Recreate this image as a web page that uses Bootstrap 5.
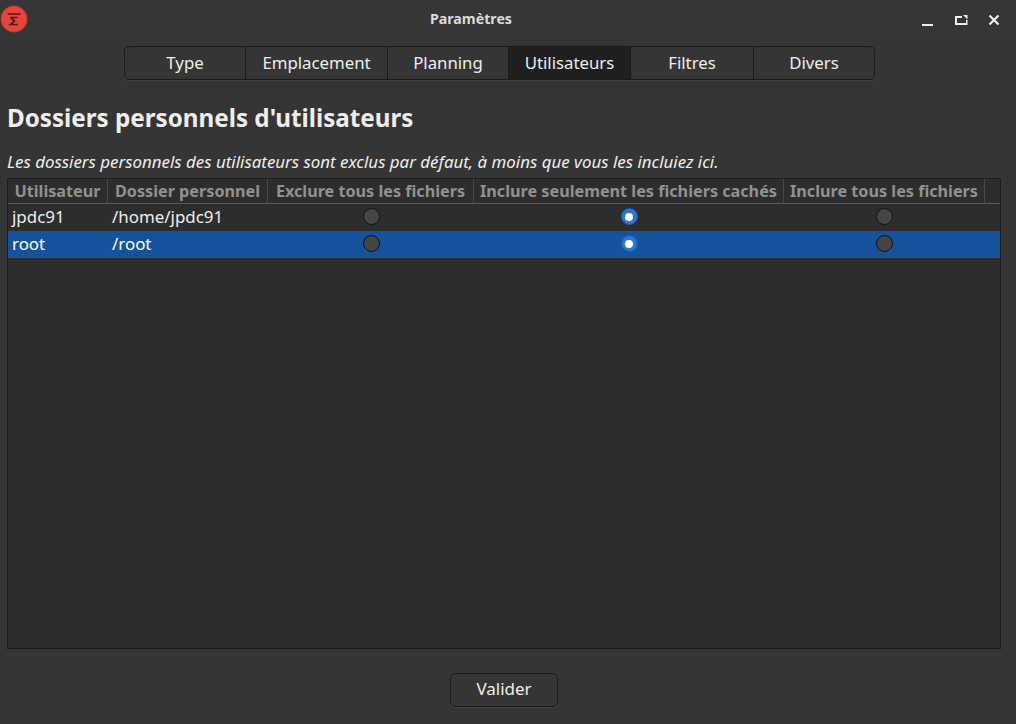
<!DOCTYPE html>
<html lang="fr"><head><meta charset="utf-8"><title>Paramètres</title>
<link href="https://cdn.jsdelivr.net/npm/bootstrap@5.3.0/dist/css/bootstrap.min.css" rel="stylesheet">
<style>
html,body{height:100%;margin:0;background:#353535}
body{font-family:"Noto Sans","Open Sans",sans-serif;color:#eeeeec;overflow:hidden}
.win{height:724px;width:1016px;background:#353535}
.titlebar{height:38px;padding:0 6px 0 0;background:#363636}
.tbicon{width:28px;height:28px;margin:5px 0 0 0}
.tbtitle{font-size:14.2px;font-weight:700;color:#dcdcdc;left:0;width:942px;top:10px;line-height:18px}
.wbtn{width:33px;height:38px;padding-top:1px}
.tabsbar{width:751px;height:34px;margin:8px 0 0 124px;border:1px solid #1b1b1b;border-radius:5px;background:#353535;box-shadow:0 1px 0 rgba(255,255,255,.06);overflow:hidden}
.tabitem{height:100%;font-size:16.8px;color:#eeeeec;border-right:1px solid #1b1b1b;line-height:31px;text-align:center}
.tabitem:last-child{border-right:0}
.w1{width:121px}.w2{width:142px}.w3{width:121px}.w4{width:122px}.w5{width:123px}.w6{flex:1}
.tabitem.on{background:#1f1f1f}
.heading{font-size:24.2px;font-weight:700;margin:22px 0 0 7px;line-height:32px;color:#eeeeec}
.sub{font-size:16.9px;font-style:italic;margin:17px 0 0 7px;line-height:22px;color:#eeeeec;white-space:nowrap}
.listbox{margin:5px 15px 0 7px;height:471px;border:1px solid #1b1b1b;background:#2d2d2d}
.lhead{height:25px;border-bottom:1px solid #5a5a59;background:#2d2d2d}
.hcell{font-size:16.2px;font-weight:700;color:#919190;line-height:24px;text-align:center;border-right:1px solid #4a4a49;height:24px;white-space:nowrap;overflow:hidden;flex:none}
.c1{width:100px}.c2{width:160px}.c3{width:206px}.c4{width:310px}.c5{width:201px}
.lrow{height:27px;font-size:16.9px;line-height:26px}
.lrow.sel{background:#15539e;color:#fff}
.bcell{flex:none;white-space:nowrap;padding-left:4px}
.radcell{flex:none;display:flex;justify-content:center;padding-top:4px}
.rad{width:17px;height:17px;border-radius:50%;background:#454545;border:1px solid #111;display:block}
.rad.chk{background:#2f76cf;border-color:#1d5cb0;position:relative}
.rad.chk::after{content:"";position:absolute;left:3.500px;top:3.500px;width:8px;height:8px;border-radius:50%;background:#fff}
.footer{padding-top:24px;margin-left:-8px}
.okbtn{width:108px;height:34px;margin-left:0;border:1px solid #1b1b1b;border-radius:5px;background:#353535;color:#eeeeec;font-size:17px;padding:0 0 3px;line-height:28px;box-shadow:0 1px 0 rgba(255,255,255,.06)}
.okbtn:hover{background:#3c3c3c;color:#fff;border-color:#1b1b1b}
</style></head>
<body>
<div class="win">
  <div class="titlebar d-flex justify-content-between position-relative">
    <svg class="tbicon" viewBox="0 0 28 28"><circle cx="14" cy="14" r="13" fill="#e8453a"/><circle cx="14" cy="14" r="13" fill="none" stroke="#c23b30" stroke-width="1"/><path d="M7.500 9h13M10.500 12.500h7M10.500 12.500l4 3.500-4 3.500h7.500" fill="none" stroke="#4a1f1a" stroke-width="1.700"/></svg>
    <div class="tbtitle position-absolute text-center">Paramètres</div>
    <div class="d-flex">
      <div class="wbtn d-flex align-items-center justify-content-center"><svg width="14" height="14" viewBox="0 0 14 14"><rect x="1" y="11" width="11" height="2" fill="#eee"/></svg></div>
      <div class="wbtn d-flex align-items-center justify-content-center"><svg width="14" height="14" viewBox="0 0 14 14"><path d="M1 3h7v2H3v5h9V7h1.500v5H1z" fill="#eee"/><path d="M9 2h4.500v4.500z" fill="#eee"/></svg></div>
      <div class="wbtn d-flex align-items-center justify-content-center"><svg width="14" height="14" viewBox="0 0 14 14"><path d="M2.500 2.500l9 9M11.500 2.500l-9 9" stroke="#eee" stroke-width="2.200"/></svg></div>
    </div>
  </div>
  <div class="tabsbar d-flex">
    <div class="tabitem w1">Type</div>
    <div class="tabitem w2">Emplacement</div>
    <div class="tabitem w3">Planning</div>
    <div class="tabitem w4 on">Utilisateurs</div>
    <div class="tabitem w5">Filtres</div>
    <div class="tabitem w6">Divers</div>
  </div>
  <div class="heading">Dossiers personnels d'utilisateurs</div>
  <div class="sub">Les dossiers personnels des utilisateurs sont exclus par défaut, à moins que vous les incluiez ici.</div>
  <div class="listbox">
    <div class="lhead d-flex">
      <div class="hcell c1">Utilisateur</div>
      <div class="hcell c2">Dossier personnel</div>
      <div class="hcell c3">Exclure tous les fichiers</div>
      <div class="hcell c4">Inclure seulement les fichiers cachés</div>
      <div class="hcell c5">Inclure tous les fichiers</div>
    </div>
    <div class="lrow d-flex">
      <div class="bcell c1">jpdc91</div>
      <div class="bcell c2">/home/jpdc91</div>
      <div class="radcell c3"><span class="rad"></span></div>
      <div class="radcell c4"><span class="rad chk"></span></div>
      <div class="radcell c5"><span class="rad"></span></div>
    </div>
    <div class="lrow sel d-flex">
      <div class="bcell c1">root</div>
      <div class="bcell c2">/root</div>
      <div class="radcell c3"><span class="rad"></span></div>
      <div class="radcell c4"><span class="rad chk"></span></div>
      <div class="radcell c5"><span class="rad"></span></div>
    </div>
  </div>
  <div class="footer d-flex justify-content-center">
    <button type="button" class="btn okbtn">Valider</button>
  </div>
</div>
<script src="https://cdn.jsdelivr.net/npm/bootstrap@5.3.0/dist/js/bootstrap.bundle.min.js"></script>
</body></html>
